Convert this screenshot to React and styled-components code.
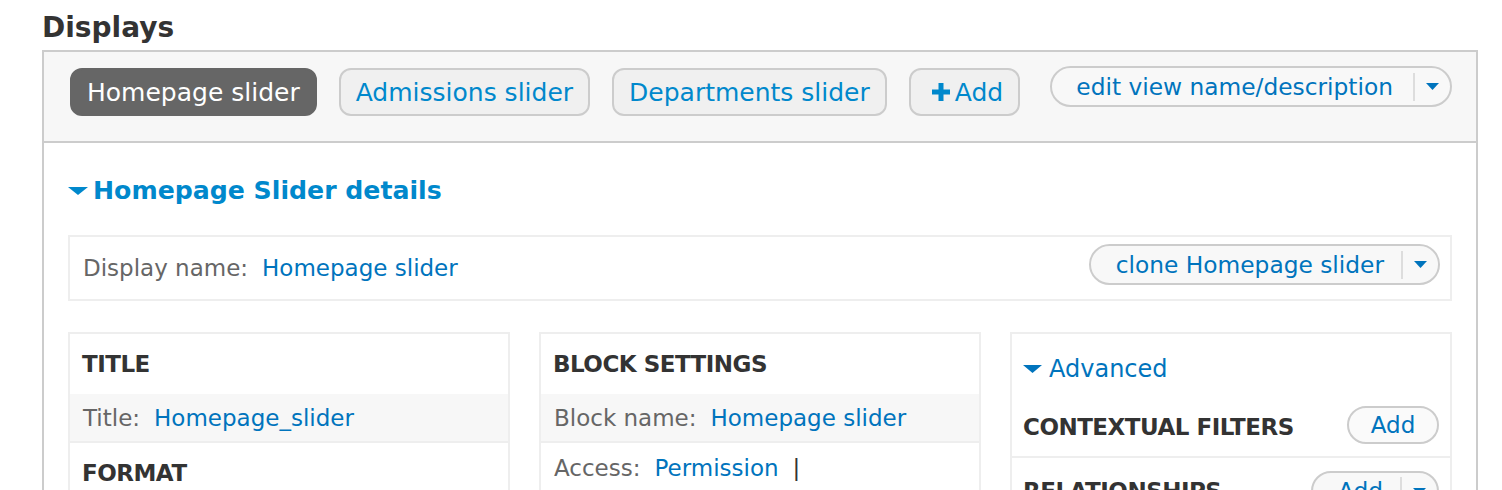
import React from 'react';
import styled, { createGlobalStyle } from 'styled-components';

const Global = createGlobalStyle`
  html, body { margin: 0; padding: 0; background: #fff; }
  body { font-family: "DejaVu Sans", Verdana, sans-serif; color: #333; overflow: hidden; }
  * { box-sizing: border-box; }
`;

const Page = styled.div`
  padding: 0 24px 0 42px;
`;

const Heading = styled.h2`
  margin: 0;
  padding-top: 11px;
  margin-bottom: 5px;
  font-size: 28px;
  line-height: 34px;
  font-weight: bold;
  color: #333;
`;

const Box = styled.div`
  border: 2px solid #ccc;
`;

const Toolbar = styled.div`
  display: flex;
  align-items: flex-start;
  gap: 22px;
  background: #f7f7f7;
  border-bottom: 2px solid #ccc;
  padding: 16px 24px 25px 26px;
`;

const Tab = styled.a`
  display: inline-flex;
  align-items: center;
  gap: 5px;
  height: 48px;
  padding: ${p => p.$pad || '0 15px'};
  border: 2px solid ${p => (p.$active ? '#666' : '#ccc')};
  border-radius: 12px;
  background: ${p => (p.$active ? '#666' : '#f0f0f0')};
  color: ${p => (p.$active ? '#fff' : '#0088cc')};
  font-size: 25px;
  white-space: nowrap;
  cursor: pointer;
`;

const Split = styled.div`
  display: flex;
  align-items: center;
  height: ${p => p.$h || 41}px;
  border: 2px solid #ccc;
  border-radius: 22px;
  background: #f8f8f8;
  margin-left: ${p => (p.$push ? 'auto' : '0')};
  margin-top: ${p => p.$mt || 0}px;
  flex-shrink: 0;
`;

const SplitLabel = styled.a`
  padding: ${p => p.$pad || '0 20px 0 24px'};
  font-size: 23.3px;
  font-weight: normal;
  letter-spacing: 0;
  text-transform: none;
  color: #0074bd;
  white-space: nowrap;
  line-height: 1;
`;

const SplitToggle = styled.span`
  display: flex;
  align-items: center;
  justify-content: center;
  width: 37px;
  height: 28px;
  border-left: 2px solid #ddd;
`;

const Content = styled.div`
  padding: 33px 24px 40px 24px;
`;

const Summary = styled.div`
  display: flex;
  align-items: center;
  gap: 5px;
  font-size: 25.2px;
  line-height: 30px;
  font-weight: bold;
  color: #0088cc;
`;

const DisplayBox = styled.div`
  margin-top: 29px;
  height: 66px;
  border: 2px solid #eee;
  display: flex;
  align-items: center;
  justify-content: space-between;
  padding: 0 10px 7px 13px;
`;

const Label = styled.span`
  color: #666;
  font-size: 23px;
  margin-right: 14px;
  white-space: nowrap;
`;

const Link = styled.a`
  color: #0074bd;
  font-size: 23px;
  white-space: nowrap;
`;

const Line = styled.div`
  display: flex;
  align-items: center;
  padding-top: 6px;
`;

const Columns = styled.div`
  margin-top: 31px;
  display: grid;
  grid-template-columns: 1fr 1fr 1fr;
  column-gap: 29px;
`;

const Column = styled.div`
  border: 2px solid #eee;
  background: #fff;
`;

const ColHead = styled.div`
  display: flex;
  align-items: center;
  justify-content: space-between;
  height: ${p => p.$h || 60}px;
  padding: 0 ${p => p.$pr || 12}px 0 ${p => p.$pl || 12}px;
  font-size: 23px;
  font-weight: bold;
  letter-spacing: -0.5px;
  color: #333;
  text-transform: uppercase;
  border-bottom: ${p => (p.$line ? '2px solid #eee' : 'none')};
`;

const Row = styled.div`
  display: flex;
  align-items: center;
  height: 49px;
  padding: 0 13px;
  background: ${p => (p.$alt ? '#f7f7f7' : '#fff')};
  border-bottom: ${p => (p.$last ? 'none' : '2px solid #eee')};
`;

const Pipe = styled.span`
  color: #333;
  font-size: 23px;
  margin-left: 14px;
`;

const Advanced = styled.div`
  display: flex;
  align-items: center;
  gap: 7px;
  height: 63px;
  padding: 6px 11px 0 11px;
  color: #0074bd;
  font-size: 24px;
`;

const Pill = styled.a`
  display: flex;
  align-items: center;
  justify-content: center;
  width: 92px;
  height: 38px;
  border: 2px solid #ccc;
  border-radius: 19px;
  background: #fafafa;
  color: #0074bd;
  font-size: 23px;
  font-weight: normal;
  letter-spacing: 0;
  text-transform: none;
  margin-top: -4px;
`;

const Caret = ({ w = 13, h = 7, color = '#0074bd' }) => (
  <svg width={w} height={h} viewBox={`0 0 ${w} ${h}`}>
    <path d={`M0 0H${w}L${w / 2} ${h}Z`} fill={color} />
  </svg>
);

const Plus = () => (
  <svg width="18" height="18" viewBox="0 0 18 18">
    <path d="M6.5 0h5v6.5H18v5h-6.5V18h-5v-6.5H0v-5h6.5z" fill="#0088cc" />
  </svg>
);

export default function App() {
  return (
    <>
      <Global />
      <Page>
        <Heading>Displays</Heading>
        <Box>
          <Toolbar>
            <Tab $active>Homepage slider</Tab>
            <Tab>Admissions slider</Tab>
            <Tab>Departments slider</Tab>
            <Tab $pad="0 15px 0 21px"><Plus />Add</Tab>
            <Split $push $mt={-2}>
              <SplitLabel>edit view name/description</SplitLabel>
              <SplitToggle><Caret /></SplitToggle>
            </Split>
          </Toolbar>
          <Content>
            <Summary>
              <Caret w={20} h={8} color="#0088cc" />
              Homepage Slider details
            </Summary>
            <DisplayBox>
              <Line>
                <Label>Display name:</Label>
                <Link>Homepage slider</Link>
              </Line>
              <Split>
                <SplitLabel $pad="0 17px 0 25px">clone Homepage slider</SplitLabel>
                <SplitToggle><Caret /></SplitToggle>
              </Split>
            </DisplayBox>
            <Columns>
              <Column>
                <ColHead>Title</ColHead>
                <Row $alt>
                  <Label>Title:</Label>
                  <Link>Homepage_slider</Link>
                </Row>
                <ColHead>Format</ColHead>
              </Column>
              <Column>
                <ColHead>Block settings</ColHead>
                <Row $alt>
                  <Label>Block name:</Label>
                  <Link>Homepage slider</Link>
                </Row>
                <Row $last>
                  <Label>Access:</Label>
                  <Link>Permission</Link>
                  <Pipe>|</Pipe>
                </Row>
              </Column>
              <Column>
                <Advanced>
                  <Caret w={19} h={8} />
                  Advanced
                </Advanced>
                <ColHead $h={61} $pl={11} $pr={11} $line>
                  Contextual filters
                  <Pill>Add</Pill>
                </ColHead>
                <ColHead $h={66} $pl={11} $pr={11}>
                  Relationships
                  <Split $h={40}>
                    <SplitLabel $pad="0 17px 0 25px">Add</SplitLabel>
                    <SplitToggle><Caret /></SplitToggle>
                  </Split>
                </ColHead>
              </Column>
            </Columns>
          </Content>
        </Box>
      </Page>
    </>
  );
}
